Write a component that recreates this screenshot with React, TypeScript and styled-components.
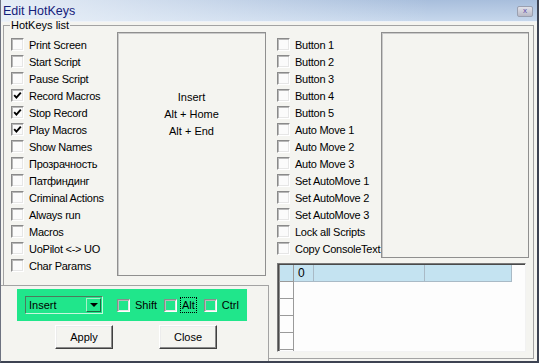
import styled, { createGlobalStyle } from "styled-components";

const GlobalStyle = createGlobalStyle`
  html, body {
    margin: 0;
    padding: 0;
    background: #f4f4f0;
  }
  body {
    font-family: "Liberation Sans", Arial, sans-serif;
    font-size: 11px;
    color: #000;
  }
`;

const leftKeys = [
  { label: "Print Screen", checked: false },
  { label: "Start Script", checked: false },
  { label: "Pause Script", checked: false },
  { label: "Record Macros", checked: true },
  { label: "Stop Record", checked: true },
  { label: "Play Macros", checked: true },
  { label: "Show Names", checked: false },
  { label: "Прозрачность", checked: false },
  { label: "Патфиндинг", checked: false },
  { label: "Criminal Actions", checked: false },
  { label: "Always run", checked: false },
  { label: "Macros", checked: false },
  { label: "UoPilot <-> UO", checked: false },
  { label: "Char Params", checked: false },
];

const rightKeys = [
  "Button 1",
  "Button 2",
  "Button 3",
  "Button 4",
  "Button 5",
  "Auto Move 1",
  "Auto Move 2",
  "Auto Move 3",
  "Set AutoMove 1",
  "Set AutoMove 2",
  "Set AutoMove 3",
  "Lock all Scripts",
  "Copy ConsoleText",
];

const assigned = ["Insert", "Alt + Home", "Alt + End"];

const CheckMark = () => (
  <svg width="9" height="9" viewBox="0 0 9 9">
    <path d="M1.2 4.2 L3.4 6.6 L7.8 1.6" fill="none" stroke="#000" strokeWidth="1.9" />
  </svg>
);

const CheckBox = ({ checked, clear }: { checked?: boolean; clear?: boolean }) => (
  <Box $clear={clear}>{checked && <CheckMark />}</Box>
);

const App = () => {
  return (
    <>
      <GlobalStyle />
      <Window>
        <TitleBar>
          <Title>Edit HotKeys</Title>
          <CloseButton>x</CloseButton>
        </TitleBar>
        <Body>
          <Frame>
            <FrameCaption>HotKeys list</FrameCaption>
            <LeftColumn>
              <TopRow>
                <CheckList $width={106} $indent={7}>
                  {leftKeys.map((k) => (
                    <CheckRow key={k.label}>
                      <CheckBox checked={k.checked} />
                      <span>{k.label}</span>
                    </CheckRow>
                  ))}
                </CheckList>
                <DisplayPanel>
                  {assigned.map((a) => (
                    <DisplayLine key={a}>{a}</DisplayLine>
                  ))}
                </DisplayPanel>
              </TopRow>
              <BottomPanel>
                <GreenBar>
                  <Combo>
                    <ComboText>Insert</ComboText>
                    <ComboButton>
                      <Arrow />
                    </ComboButton>
                  </Combo>
                  <Modifier $first>
                    <CheckBox clear />
                    <span>Shift</span>
                  </Modifier>
                  <Modifier $tight>
                    <CheckBox clear />
                    <FocusLabel>Alt</FocusLabel>
                  </Modifier>
                  <Modifier>
                    <CheckBox clear />
                    <span>Ctrl</span>
                  </Modifier>
                </GreenBar>
                <ButtonRow>
                  <PushButton $offset={55}>Apply</PushButton>
                  <PushButton $offset={46}>Close</PushButton>
                </ButtonRow>
              </BottomPanel>
            </LeftColumn>
            <RightColumn>
              <TopRow>
                <CheckList $width={104} $indent={0}>
                  {rightKeys.map((k) => (
                    <CheckRow key={k}>
                      <CheckBox />
                      <span>{k}</span>
                    </CheckRow>
                  ))}
                </CheckList>
                <SidePanel />
              </TopRow>
              <Grid>
                {[0, 1, 2, 3, 4, 5].map((r) => (
                  <GridRow key={r}>
                    <HeaderCell $selected={r === 0} />
                    {r === 0 && (
                      <>
                        <Cell $w={20}>0</Cell>
                        <Cell $w={111} />
                        <Cell $w={87} />
                      </>
                    )}
                  </GridRow>
                ))}
              </Grid>
            </RightColumn>
          </Frame>
        </Body>
      </Window>
    </>
  );
};

export default App;

const Window = styled.div`
  width: 539px;
  height: 363px;
  box-sizing: border-box;
  display: flex;
  flex-direction: column;
  background: #f4f4f0;
  border-left: 1px solid #6d7280;
  border-right: 2px solid #3d4352;
  border-bottom: 2px solid #3d4352;
  overflow: hidden;
`;

const TitleBar = styled.div`
  height: 21px;
  flex-shrink: 0;
  display: flex;
  align-items: center;
  justify-content: space-between;
  padding: 0 4px 0 2px;
  background: linear-gradient(to right, rgba(236, 242, 249, 0.9), rgba(236, 242, 249, 0) 80%),
    linear-gradient(to bottom, #a8bedc, #c6d7ec);
  border-bottom: 1px solid #eef2f8;
`;

const Title = styled.div`
  font-size: 12.5px;
  color: #14217a;
  padding-top: 1px;
`;

const CloseButton = styled.div`
  width: 16px;
  height: 11px;
  margin-top: 2px;
  box-sizing: border-box;
  border: 1px solid #9aa0b0;
  border-radius: 2px;
  background: linear-gradient(to bottom, #e2e2ea, #b9b9c6);
  color: #5b4ca8;
  font-size: 8px;
  line-height: 8px;
  text-align: center;
`;

const Body = styled.div`
  flex: 1;
  padding: 3px 0 0 2px;
`;

const Frame = styled.div`
  position: relative;
  width: 531px;
  height: 334px;
  box-sizing: border-box;
  border: 1px solid #a3a3a3;
  display: flex;
`;

const FrameCaption = styled.div`
  position: absolute;
  left: 6px;
  top: -7px;
  padding: 0 1px;
  line-height: 13px;
  background: #f4f4f0;
`;

const LeftColumn = styled.div`
  width: 264px;
  display: flex;
  flex-direction: column;
`;

const RightColumn = styled.div`
  display: flex;
  flex-direction: column;
  margin-left: 9px;
`;

const TopRow = styled.div`
  display: flex;
  align-items: flex-start;
`;

const CheckList = styled.div<{ $width: number; $indent: number }>`
  width: ${(p) => p.$width}px;
  margin-top: 10px;
  margin-left: ${(p) => p.$indent}px;
  display: flex;
  flex-direction: column;
`;

const CheckRow = styled.div`
  height: 17px;
  display: flex;
  align-items: center;
  gap: 5px;
  white-space: nowrap;
  letter-spacing: -0.25px;
`;

const Box = styled.div<{ $clear?: boolean }>`
  width: 13px;
  height: 13px;
  flex-shrink: 0;
  box-sizing: border-box;
  border: 1px solid;
  border-color: #8a8a8a #ffffff #ffffff #8a8a8a;
  box-shadow: inset 1px 1px 0 #b8b8b8, inset -1px -1px 0 #e6e6e6;
  background: ${(p) => (p.$clear ? "transparent" : "#fbfbfb")};
  display: flex;
  align-items: center;
  justify-content: center;
`;

const DisplayPanel = styled.div`
  width: 149px;
  height: 244px;
  margin-top: 6px;
  box-sizing: border-box;
  border: 1px solid #8f8f8f;
  box-shadow: inset 1px 1px 0 #c9c9c9;
  padding-top: 56px;
  text-align: center;
`;

const DisplayLine = styled.div`
  line-height: 17px;
`;

const SidePanel = styled.div`
  width: 148px;
  height: 226px;
  margin-top: 6px;
  box-sizing: border-box;
  border: 1px solid #8f8f8f;
  box-shadow: inset 1px 1px 0 #c9c9c9;
`;

const BottomPanel = styled.div`
  margin-top: auto;
  margin-left: -4px;
  margin-bottom: -3px;
  width: 269px;
  height: 76px;
  box-sizing: border-box;
  border-top: 1px solid #a3a3a3;
  border-right: 1px solid #a3a3a3;
  background: #f4f4f0;
  padding-top: 3px;
`;

const GreenBar = styled.div`
  margin-left: 17px;
  width: 230px;
  height: 32px;
  box-sizing: border-box;
  background: #20e68b;
  display: flex;
  align-items: center;
  padding-left: 8px;
`;

const Combo = styled.div`
  width: 78px;
  height: 18px;
  box-sizing: border-box;
  border: 1px solid;
  border-color: #4d7a5c #c8f7dd #c8f7dd #4d7a5c;
  display: flex;
  align-items: center;
`;

const ComboText = styled.div`
  flex: 1;
  padding-left: 3px;
`;

const ComboButton = styled.div`
  width: 15px;
  height: 14px;
  margin-right: 1px;
  box-sizing: border-box;
  border: 1px solid;
  border-color: #a8f2c8 #1e6a42 #1e6a42 #a8f2c8;
  display: flex;
  align-items: center;
  justify-content: center;
`;

const Arrow = styled.div`
  width: 0;
  height: 0;
  border-left: 4px solid transparent;
  border-right: 4px solid transparent;
  border-top: 4px solid #000;
`;

const Modifier = styled.div<{ $first?: boolean; $tight?: boolean }>`
  display: flex;
  align-items: center;
  gap: ${(p) => (p.$tight ? 3 : 5)}px;
  margin-left: ${(p) => (p.$first ? 14 : 7)}px;
  white-space: nowrap;
`;

const FocusLabel = styled.span`
  border: 1px dotted #000;
  padding: 1px 1px;
  line-height: 12px;
`;

const ButtonRow = styled.div`
  display: flex;
  margin-top: 4px;
`;

const PushButton = styled.div<{ $offset: number }>`
  margin-left: ${(p) => p.$offset}px;
  width: 58px;
  height: 24px;
  box-sizing: border-box;
  border: 1px solid;
  border-color: #ffffff #404040 #404040 #ffffff;
  box-shadow: inset -1px -1px 0 #8a8a8a, inset 1px 1px 0 #ececec;
  display: flex;
  align-items: center;
  justify-content: center;
`;

const Grid = styled.div`
  margin-top: 5px;
  width: 249px;
  height: 89px;
  box-sizing: border-box;
  border: 1px solid;
  border-color: #7a7a7a #f2f2f2 #f2f2f2 #7a7a7a;
  box-shadow: inset 1px 1px 0 #4a4a4a;
  background: #fdfdfd;
  overflow: hidden;
  padding: 1px 0 0 1px;
`;

const GridRow = styled.div`
  display: flex;
  height: 17px;
  flex-shrink: 0;
`;

const HeaderCell = styled.div<{ $selected?: boolean }>`
  width: 15px;
  box-sizing: border-box;
  border-left: 1px solid #8c8c8c;
  border-right: 1px solid #9a9a9a;
  border-bottom: 1px solid #9a9a9a;
  background: ${(p) => (p.$selected ? "#c4e3f1" : "#fdfdfd")};
`;

const Cell = styled.div<{ $w: number }>`
  width: ${(p) => p.$w}px;
  box-sizing: border-box;
  border-right: 1px solid #a9bac6;
  border-bottom: 1px solid #a9bac6;
  background: #c4e3f1;
  padding-left: 4px;
  line-height: 16px;
  font-size: 12px;
`;
